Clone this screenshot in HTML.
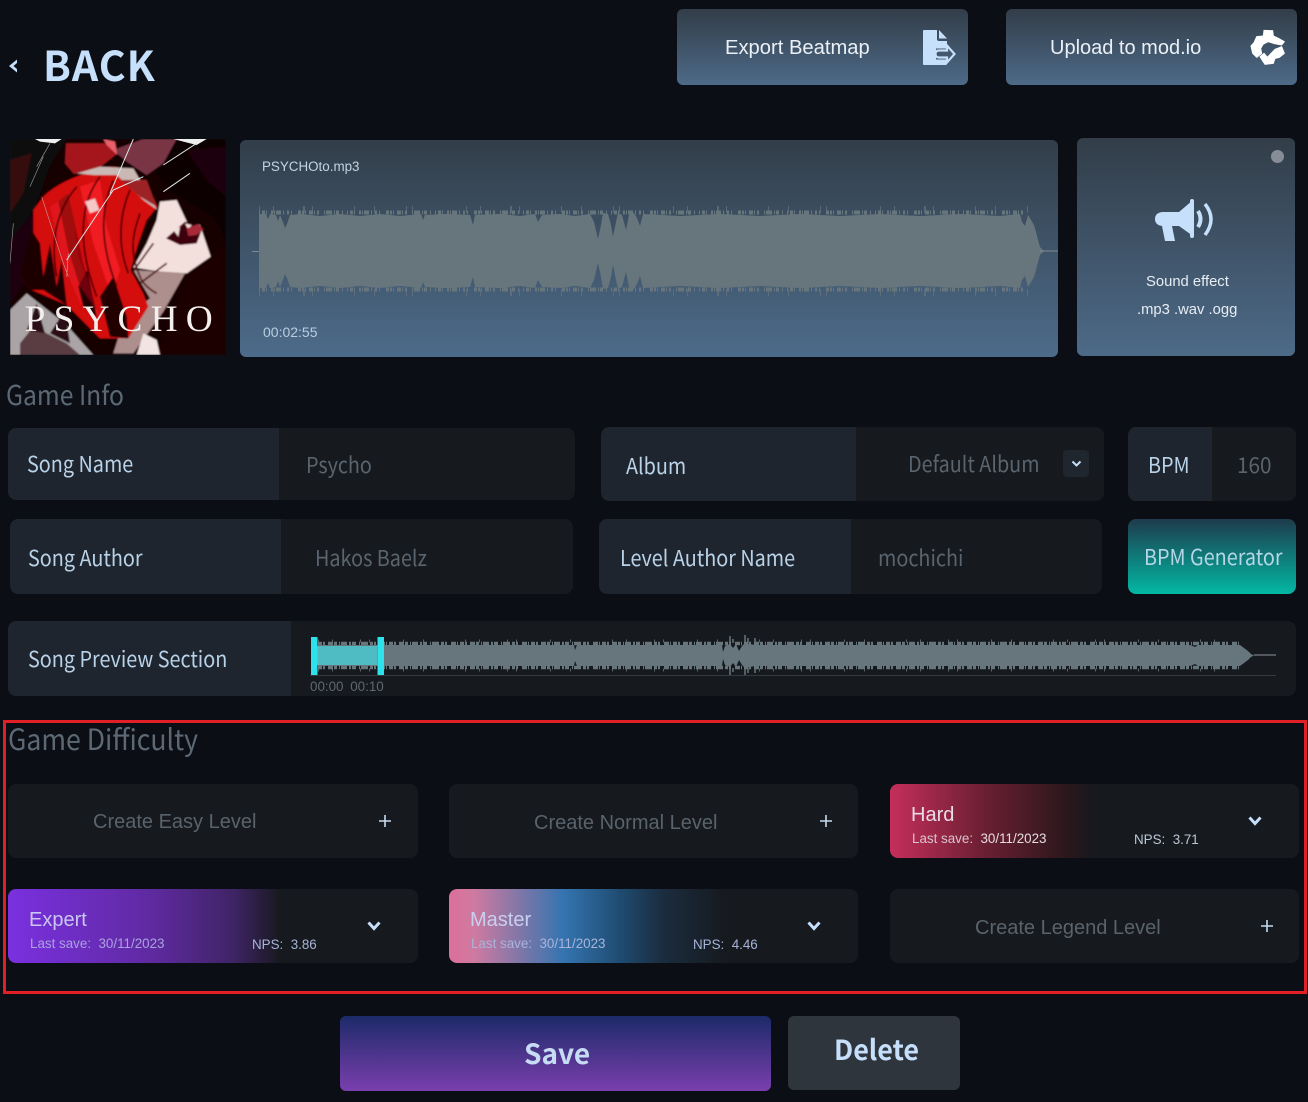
<!DOCTYPE html>
<html lang="en"><head><meta charset="utf-8"><title>Beatmap Editor</title>
<style>
*{box-sizing:border-box}
html,body{margin:0;padding:0;background:#0c0e16}
body{width:1308px;height:1102px;position:relative;overflow:hidden;font-family:"Liberation Sans",sans-serif}
.a{position:absolute;white-space:nowrap}
.n{font-family:"Liberation Sans","Noto Sans CJK JP",sans-serif}
.s{font-family:"Noto Sans CJK JP","Liberation Sans",sans-serif}
.grad{background:linear-gradient(180deg,#323d48 0%,#4d6a88 100%);border-radius:6px}
.row{position:absolute;background:#16191d;border-radius:8px;overflow:hidden}
.row i{position:absolute;left:0;top:0;bottom:0;background:#1e252e;border-radius:8px 0 0 8px}
.lab,.ph,.h{transform:scaleX(.9);transform-origin:0 50%}
.lab{position:absolute;white-space:nowrap;font-family:"Noto Sans CJK JP","Liberation Sans",sans-serif;font-size:22px;line-height:30px;color:#b9d2e8}
.ph{position:absolute;white-space:nowrap;font-family:"Noto Sans CJK JP","Liberation Sans",sans-serif;font-size:22px;line-height:30px;color:#59646e}
.h{position:absolute;white-space:nowrap;font-family:"Noto Sans CJK JP","Liberation Sans",sans-serif;color:#5c6974}
.card{position:absolute;width:410px;height:74px;border-radius:8px;background:#16191d;overflow:hidden}
.ct{position:absolute;white-space:nowrap;font-size:20px;line-height:24px;color:#59636c}
.tt{position:absolute;white-space:nowrap;font-size:20px;line-height:24px;left:21px;top:19px}
.sm{position:absolute;white-space:nowrap;font-size:13.400px;line-height:16px;top:47px}
svg{position:absolute;overflow:visible}
</style></head>
<body>
<svg style="left:7px;top:58px" width="12" height="16" viewBox="0 0 12 16"><path d="M10 1.500 2 8 10 14.500 10 11 6.500 8 10 5Z" fill="#c6e0fb"/></svg>
<div class="a s" style="left:43px;top:35px;font-size:41px;line-height:56px;font-weight:700;color:#c6e0fb;letter-spacing:1px">BACK</div>

<div class="a grad" style="left:677px;top:9px;width:291px;height:76px"></div>
<div class="a" style="left:725px;top:36px;font-size:20.200px;line-height:24px;color:#eaf0f6">Export Beatmap</div>
<svg style="left:923px;top:30px" width="33" height="35" viewBox="0 0 33 35"><path d="M1 0H14V9Q14 11 16 11H24V34Q24 35 22 35H1Q0 35 0 34V1Q0 0 1 0Z" fill="#c6e0fb"/><path d="M16 0 24 8.500H16Z" fill="#c6e0fb"/><path d="M13 24H25" stroke="#43586f" stroke-width="11"/><path d="M23 14H26V35H23Z" fill="#43586f"/><path d="M16 20.500H24V15.500L31.500 24 24 32.500V27.500H16Q12.500 27.500 12.500 24T16 20.500Z" fill="none" stroke="#c6e0fb" stroke-width="2.200"/></svg>

<div class="a grad" style="left:1006px;top:9px;width:291px;height:76px"></div>
<div class="a" style="left:1050px;top:36px;font-size:20px;line-height:24px;color:#eaf0f6">Upload to mod.io</div>
<svg style="left:1240px;top:20px" width="55" height="55" viewBox="0 0 165 165"><g fill="#fff" stroke="#fff" stroke-width="3" stroke-linejoin="round"><path d="M50 50 70 48 72 31 98 32 100 48 115 55 133 65 125 75 100 70 85 65 70 72 62 85 65 100 50 112 38 100 33 78 42 68Z"/><path d="M125 80 133 100 118 112 105 115 100 130 75 133 65 118 60 110 72 100 82 112 105 88Z"/></g></svg>

<!-- cover art -->
<svg style="left:10px;top:139px" width="216" height="216" viewBox="30 27 648 648">
<defs><clipPath id="cc"><rect x="30" y="27" width="648" height="648"/></clipPath><filter id="bl" x="0" y="0" width="1" height="1"><feGaussianBlur stdDeviation="2.500"/></filter></defs>
<g clip-path="url(#cc)">
<g filter="url(#bl)">
<rect x="30" y="27" width="648" height="648" fill="#160305"/>
<path d="M30 27H200L150 110 110 220 70 300 30 330Z" fill="#0f0709"/>
<path d="M30 90 95 70 70 190 30 250Z" fill="#35080d"/>
<path d="M30 330 100 250 90 440 30 520Z" fill="#1f0508"/>
<path d="M420 27H678V330L640 260 520 190 470 130Z" fill="#070102"/>
<path d="M560 60 678 50V200L620 150Z" fill="#1d0508"/>
<path d="M560 440 678 340V675H470Z" fill="#1a0306"/>
<path d="M340 60 430 27H530L490 100 440 135 380 95Z" fill="#7a3445"/>
<path d="M198 40H340L352 70 300 112 222 132 195 100Z" fill="#a5181d"/>
<path d="M310 27 345 35 352 75 320 45Z" fill="#e8606a"/>
<!-- neck & face -->
<path d="M400 420 555 430 490 545 400 670 340 670 375 560 450 505Z" fill="#ad8f8d"/>
<path d="M480 215 530 210 565 285 600 285 632 380 560 430 480 425 400 412 440 340 470 270Z" fill="#f3dfdb"/>
<path d="M498 325 555 275 585 285 605 300 590 340 540 345Z" fill="#3e060a"/>
<path d="M520 300 540 290 535 320ZM555 280 565 300 575 285Z" fill="#f3dfdb"/>
<path d="M560 295 595 282 610 298 590 315 565 318Z" fill="#a82a38"/>
<!-- hair -->
<path d="M130 200C170 160 240 130 330 110 400 110 450 170 472 230L440 270 415 340 392 420 430 490 445 530 385 625 300 625 200 525 95 480 60 440 100 330 100 240Z" fill="#d40a10"/>
<path d="M240 170 300 150 320 290 360 420 335 500 280 340Z" fill="#f01a22"/>
<path d="M150 230 210 190 235 380 300 560 240 520 190 400Z" fill="#e0141a"/>
<path d="M60 440 95 300 120 340 130 440 150 340 170 470 185 390 200 525 130 480 95 480Z" fill="#1a0306"/>
<path d="M235 470 262 420 290 560 250 530ZM300 500 340 440 380 560 385 625 330 620Z" fill="#200305"/>
<path d="M175 215 205 190 250 400 290 540 240 470 205 360Z" fill="#8a0508" opacity=".75"/>
<g fill="none" stroke="#4a0205" stroke-width="5">
<path d="M300 140C240 220 230 340 290 500"/><path d="M340 150C300 240 300 340 350 470"/><path d="M390 180C360 250 350 340 385 430"/><path d="M230 170C170 240 150 330 170 440"/>
<path d="M420 250C400 310 385 360 420 440 430 470 470 490 470 490"/><path d="M395 430 460 340"/><path d="M420 460 500 400"/>
</g>
<path d="M255 215 285 205 298 240 270 250Z" fill="#f6c8c8"/>
<path d="M230 130 300 110 400 115 472 240 430 210 350 135 280 135Z" fill="#c9b8b4"/>
<path d="M360 150 440 150 470 230 420 200Z" fill="#9d2226"/>
<!-- lower left grit -->
<path d="M30 540 80 490 200 585 280 675H30Z" fill="#aaa4a7"/>
<path d="M60 640 100 590 200 640 240 675H60Z" fill="#5a3d42"/>
<path d="M80 600 110 520 135 610ZM150 610 195 540 210 640Z" fill="#2a0f12"/>
<path d="M430 610 470 630 480 675H410Z" fill="#f1e4e2"/>
</g>
<path d="M105 27H185L165 40 120 35ZM520 27H620L590 45 550 35Z" fill="#eef0f0"/>
<path d="M490 105 590 40M490 185 570 130M330 190 400 27M200 390 340 180 430 140" fill="none" stroke="#dfe9e9" stroke-width="3"/>
<path d="M125 200 190 400 205 440M200 440 205 370M40 280 30 400M110 110 150 40M90 170 130 80" stroke="#c9d0d0" stroke-width="2" fill="none" opacity=".7"/>
<text x="74" y="603" font-family="Liberation Serif,serif" font-size="112" fill="#f3efec" textLength="564">PSYCHO</text>
</g></svg>

<!-- main waveform panel -->
<div class="a grad" style="left:240px;top:140px;width:818px;height:217px;background:linear-gradient(180deg,#323e49 0%,#4d6b8a 100%)"></div>
<div class="a n" style="left:262px;top:158px;font-size:13.400px;line-height:17px;color:#c3d3e2">PSYCHOto.mp3</div>
<div class="a" style="left:263px;top:324px;font-size:14px;line-height:17px;color:#b9cde0">00:02:55</div>
<svg style="left:0;top:0" width="1308" height="400">
<defs><g id="w1" fill="#67757d">
<path d="M259 251V214H266L268 219 270 214 276 215 278 221 280 215 283 222 285 228 287 224 290 215 300 214 320 216 340 214 360 216 380 214 400 216 421 214 423 220 425 215 445 214 470 215 473 225 475 215 500 214 520 216 535 214 538 222 542 215 560 214 575 216 590 214 594 222 598 239 601 225 603 213 608 214 611 225 613 237 616 222 618 213 622 215 626 230 629 215 634 213 637 218 640 226 643 214 680 216 720 214 760 216 800 214 840 216 880 214 920 216 960 214 1000 216 1020 214 1022 222 1025 226 1028 215 1031 220 1034 225 1036 232 1038 240 1040 247 1044 251Z"/>
<path d="M259 212.500H1028" fill="none" stroke="#67757d" stroke-width="4" stroke-dasharray="1 2 3 1 1 4 2 1 1 1 5 2 1 3 2 2 1 6 3 1 2 1 1 3 4 1 1 2 2 5 1 1 6 2 1 1 3 3 1 4"/>
<path d="M259 209.500H1030" fill="none" stroke="#67757d" stroke-width="7" stroke-dasharray="1 13 1 29 2 7 1 41 1 19 1 31 1 5 1 53" opacity=".7"/>
</g>
<g id="w2" fill="#67757d">
<path d="M318 655.500V645H574L575 650 577 645H722L723 652 725 646 730 644 733 648 736 644 739 651 742 646 745 643 750 644 755 645H1190L1195 647 1198 645H1240L1244 648 1248 651 1251 654 1254 655.500Z"/>
<path d="M318 643.500H1240" fill="none" stroke="#67757d" stroke-width="3.500" stroke-dasharray="4 1 2 3 5 1 3 2 1 1 6 2 2 1 4 3 1 1 7 2 3 1 2 4 5 1 1 2"/>
<path d="M318 641H1240" fill="none" stroke="#67757d" stroke-width="3" stroke-dasharray="1 13 1 27 1 8 1 33 1 19 1 41" opacity=".8"/>
<path d="M730 643V636M733 643V639M745 643V635M748 643V638M755 643V638" stroke="#67757d" stroke-width="1.500"/>
</g></defs>
<use href="#w1"/><use href="#w1" transform="translate(0,502) scale(1,-1)"/>
<path d="M252 251.500H259M1040 251H1058" stroke="#7d8a92" stroke-width="1"/>
</svg>

<!-- sound effect -->
<div class="a grad" style="left:1077px;top:138px;width:218px;height:218px"></div>
<div class="a" style="left:1271px;top:150px;width:13px;height:13px;border-radius:50%;background:#868d96"></div>
<svg style="left:1155px;top:199px" width="58" height="43" viewBox="0 0 58 43"><path d="M7 13H24L38 1V37L24 27H17L20 42H10L7 27Q0 26 0 20T7 13Z" fill="#c6e0fb"/><rect x="35" y="0" width="4" height="39" rx="2" fill="#c6e0fb"/><path d="M43 12Q48 20 43 28" fill="none" stroke="#c6e0fb" stroke-width="4"/><path d="M50 5Q62 20 50 36" fill="none" stroke="#c6e0fb" stroke-width="3.500"/></svg>
<div class="a" style="left:1146px;top:273px;font-size:14.800px;line-height:18px;color:#e7edf3">Sound effect</div>
<div class="a" style="left:1137px;top:301px;font-size:14.800px;line-height:18px;color:#e7edf3">.mp3 .wav .ogg</div>

<div class="h" style="left:6px;top:375px;font-size:27px;line-height:38px;transform:scaleX(.914)">Game Info</div>

<div class="row" style="left:8px;top:428px;width:567px;height:72px"><i style="width:271px"></i></div>
<div class="lab" style="left:27px;top:448px">Song Name</div>
<div class="ph" style="left:306px;top:449px">Psycho</div>

<div class="row" style="left:601px;top:427px;width:503px;height:74px"><i style="width:255px"></i></div>
<div class="lab" style="left:626px;top:450px">Album</div>
<div class="ph" style="left:908px;top:448px">Default Album</div>
<div class="a" style="left:1063px;top:450px;width:26px;height:27px;border-radius:4px;background:#20262d"></div>
<svg style="left:1071px;top:460px" width="11" height="8" viewBox="0 0 11 8"><path d="M1.500 1.500 5.500 5.500 9.500 1.500" fill="none" stroke="#c6e0fb" stroke-width="2"/></svg>

<div class="row" style="left:1128px;top:427px;width:168px;height:74px"><i style="width:84px"></i></div>
<div class="lab" style="left:1148px;top:449px">BPM</div>
<div class="ph" style="left:1237px;top:449px;transform:scaleX(.94)">160</div>

<div class="row" style="left:10px;top:519px;width:563px;height:75px"><i style="width:271px"></i></div>
<div class="lab" style="left:28px;top:542px">Song Author</div>
<div class="ph" style="left:315px;top:542px">Hakos Baelz</div>

<div class="row" style="left:599px;top:519px;width:503px;height:75px"><i style="width:252px"></i></div>
<div class="lab" style="left:620px;top:542px">Level Author Name</div>
<div class="ph" style="left:878px;top:542px">mochichi</div>

<div class="a" style="left:1128px;top:519px;width:168px;height:75px;border-radius:8px;background:linear-gradient(180deg,#1e3b4c 0%,#02b8a4 100%)"></div>
<div class="lab" style="left:1144px;top:541px;color:#b4d6e6">BPM Generator</div>

<div class="row" style="left:8px;top:621px;width:1288px;height:75px"><i style="width:283px"></i></div>
<div class="lab" style="left:28px;top:643px">Song Preview Section</div>
<svg style="left:0;top:0" width="1308" height="700">
<use href="#w2"/><use href="#w2" transform="translate(0,1311) scale(1,-1)"/>
<path d="M1254 655H1276" stroke="#8a969d" stroke-width="1"/>
<path d="M310 675.500H1276" stroke="#34393e" stroke-width="1"/>
<rect x="317" y="646" width="60" height="19" fill="#4fbcc4"/>
<rect x="311" y="637" width="6.500" height="38" fill="#2de2ea"/>
<rect x="377.500" y="637" width="6.500" height="38" fill="#2de2ea"/>
</svg>
<div class="a" style="left:310px;top:679px;font-size:13.400px;line-height:15px;color:#5f6870;word-spacing:3px">00:00 00:10</div>

<div class="a" style="left:3px;top:720px;width:1304px;height:274px;border:3.500px solid #e21f27"></div>
<div class="h" style="left:8px;top:718px;font-size:29px;line-height:41px;transform:scaleX(.918)">Game Difficulty</div>

<div class="card" style="left:8px;top:784px"><div class="ct" style="left:85px;top:26px">Create Easy Level</div></div>
<svg style="left:378px;top:814px" width="14" height="14"><path d="M7 1V13M1 7H13" stroke="#c6dcf0" stroke-width="1.600"/></svg>
<div class="card" style="left:449px;top:784px;width:409px"><div class="ct" style="left:85px;top:27px">Create Normal Level</div></div>
<svg style="left:819px;top:814px" width="14" height="14"><path d="M7 1V13M1 7H13" stroke="#c6dcf0" stroke-width="1.600"/></svg>

<div class="card" style="left:890px;top:784px;width:409px;background:linear-gradient(90deg,#c52f5a 0%,#6b1f33 23%,#2c171c 43%,#16191d 50%)">
<div class="tt" style="color:#ebdbe8">Hard</div>
<div class="sm" style="left:22px;color:#d9c5cf">Last save:&nbsp; <span style="color:#e6dce2">30/11/2023</span></div>
<div class="sm" style="left:244px;top:48px;color:#bcc8d8">NPS:&nbsp; 3.71</div>
</div>
<svg style="left:1248px;top:816px" width="14" height="11" viewBox="0 0 14 11"><path d="M1.500 1.500 7 7.500 12.500 1.500" fill="none" stroke="#c6e0fb" stroke-width="3"/></svg>

<div class="card" style="left:8px;top:889px;background:linear-gradient(90deg,#7a30e0 0%,#5f2aa0 35%,#3f2466 55%,#1d1a28 65%,#16191d 66%)">
<div class="tt" style="color:#c9c6f2">Expert</div>
<div class="sm" style="left:22px;color:#a9a2e0">Last save:&nbsp; 30/11/2023</div>
<div class="sm" style="left:244px;top:48px;color:#a6b4d8">NPS:&nbsp; 3.86</div>
</div>
<svg style="left:367px;top:921px" width="14" height="11" viewBox="0 0 14 11"><path d="M1.500 1.500 7 7.500 12.500 1.500" fill="none" stroke="#c6e0fb" stroke-width="3"/></svg>

<div class="card" style="left:449px;top:889px;width:409px;background:linear-gradient(90deg,#dc6f9b 0%,#cf7aa0 6%,#3474b0 28%,#1f4b70 42%,#1b2d40 52%,#16191d 68%)">
<div class="tt" style="color:#c9cff0">Master</div>
<div class="sm" style="left:22px;color:#a9b4da">Last save:&nbsp; 30/11/2023</div>
<div class="sm" style="left:244px;top:48px;color:#a6b4d8">NPS:&nbsp; 4.46</div>
</div>
<svg style="left:807px;top:921px" width="14" height="11" viewBox="0 0 14 11"><path d="M1.500 1.500 7 7.500 12.500 1.500" fill="none" stroke="#c6e0fb" stroke-width="3"/></svg>

<div class="card" style="left:890px;top:889px;width:409px"><div class="ct" style="left:85px;top:27px">Create Legend Level</div></div>
<svg style="left:1260px;top:919px" width="14" height="14"><path d="M7 1V13M1 7H13" stroke="#c6dcf0" stroke-width="1.600"/></svg>

<div class="a" style="left:340px;top:1016px;width:431px;height:75px;border-radius:6px;background:linear-gradient(180deg,#1c2a68 0%,#7a3fae 100%)"></div>
<div class="a s" style="left:524px;top:1034px;font-size:28px;line-height:38px;font-weight:700;color:#c6dcf4">Save</div>
<div class="a" style="left:788px;top:1016px;width:172px;height:74px;border-radius:6px;background:#2e353c"></div>
<div class="a s" style="left:834px;top:1030px;font-size:28px;line-height:38px;font-weight:700;color:#c6e0fb;transform:scaleX(.96);transform-origin:0 50%">Delete</div>
</body></html>
